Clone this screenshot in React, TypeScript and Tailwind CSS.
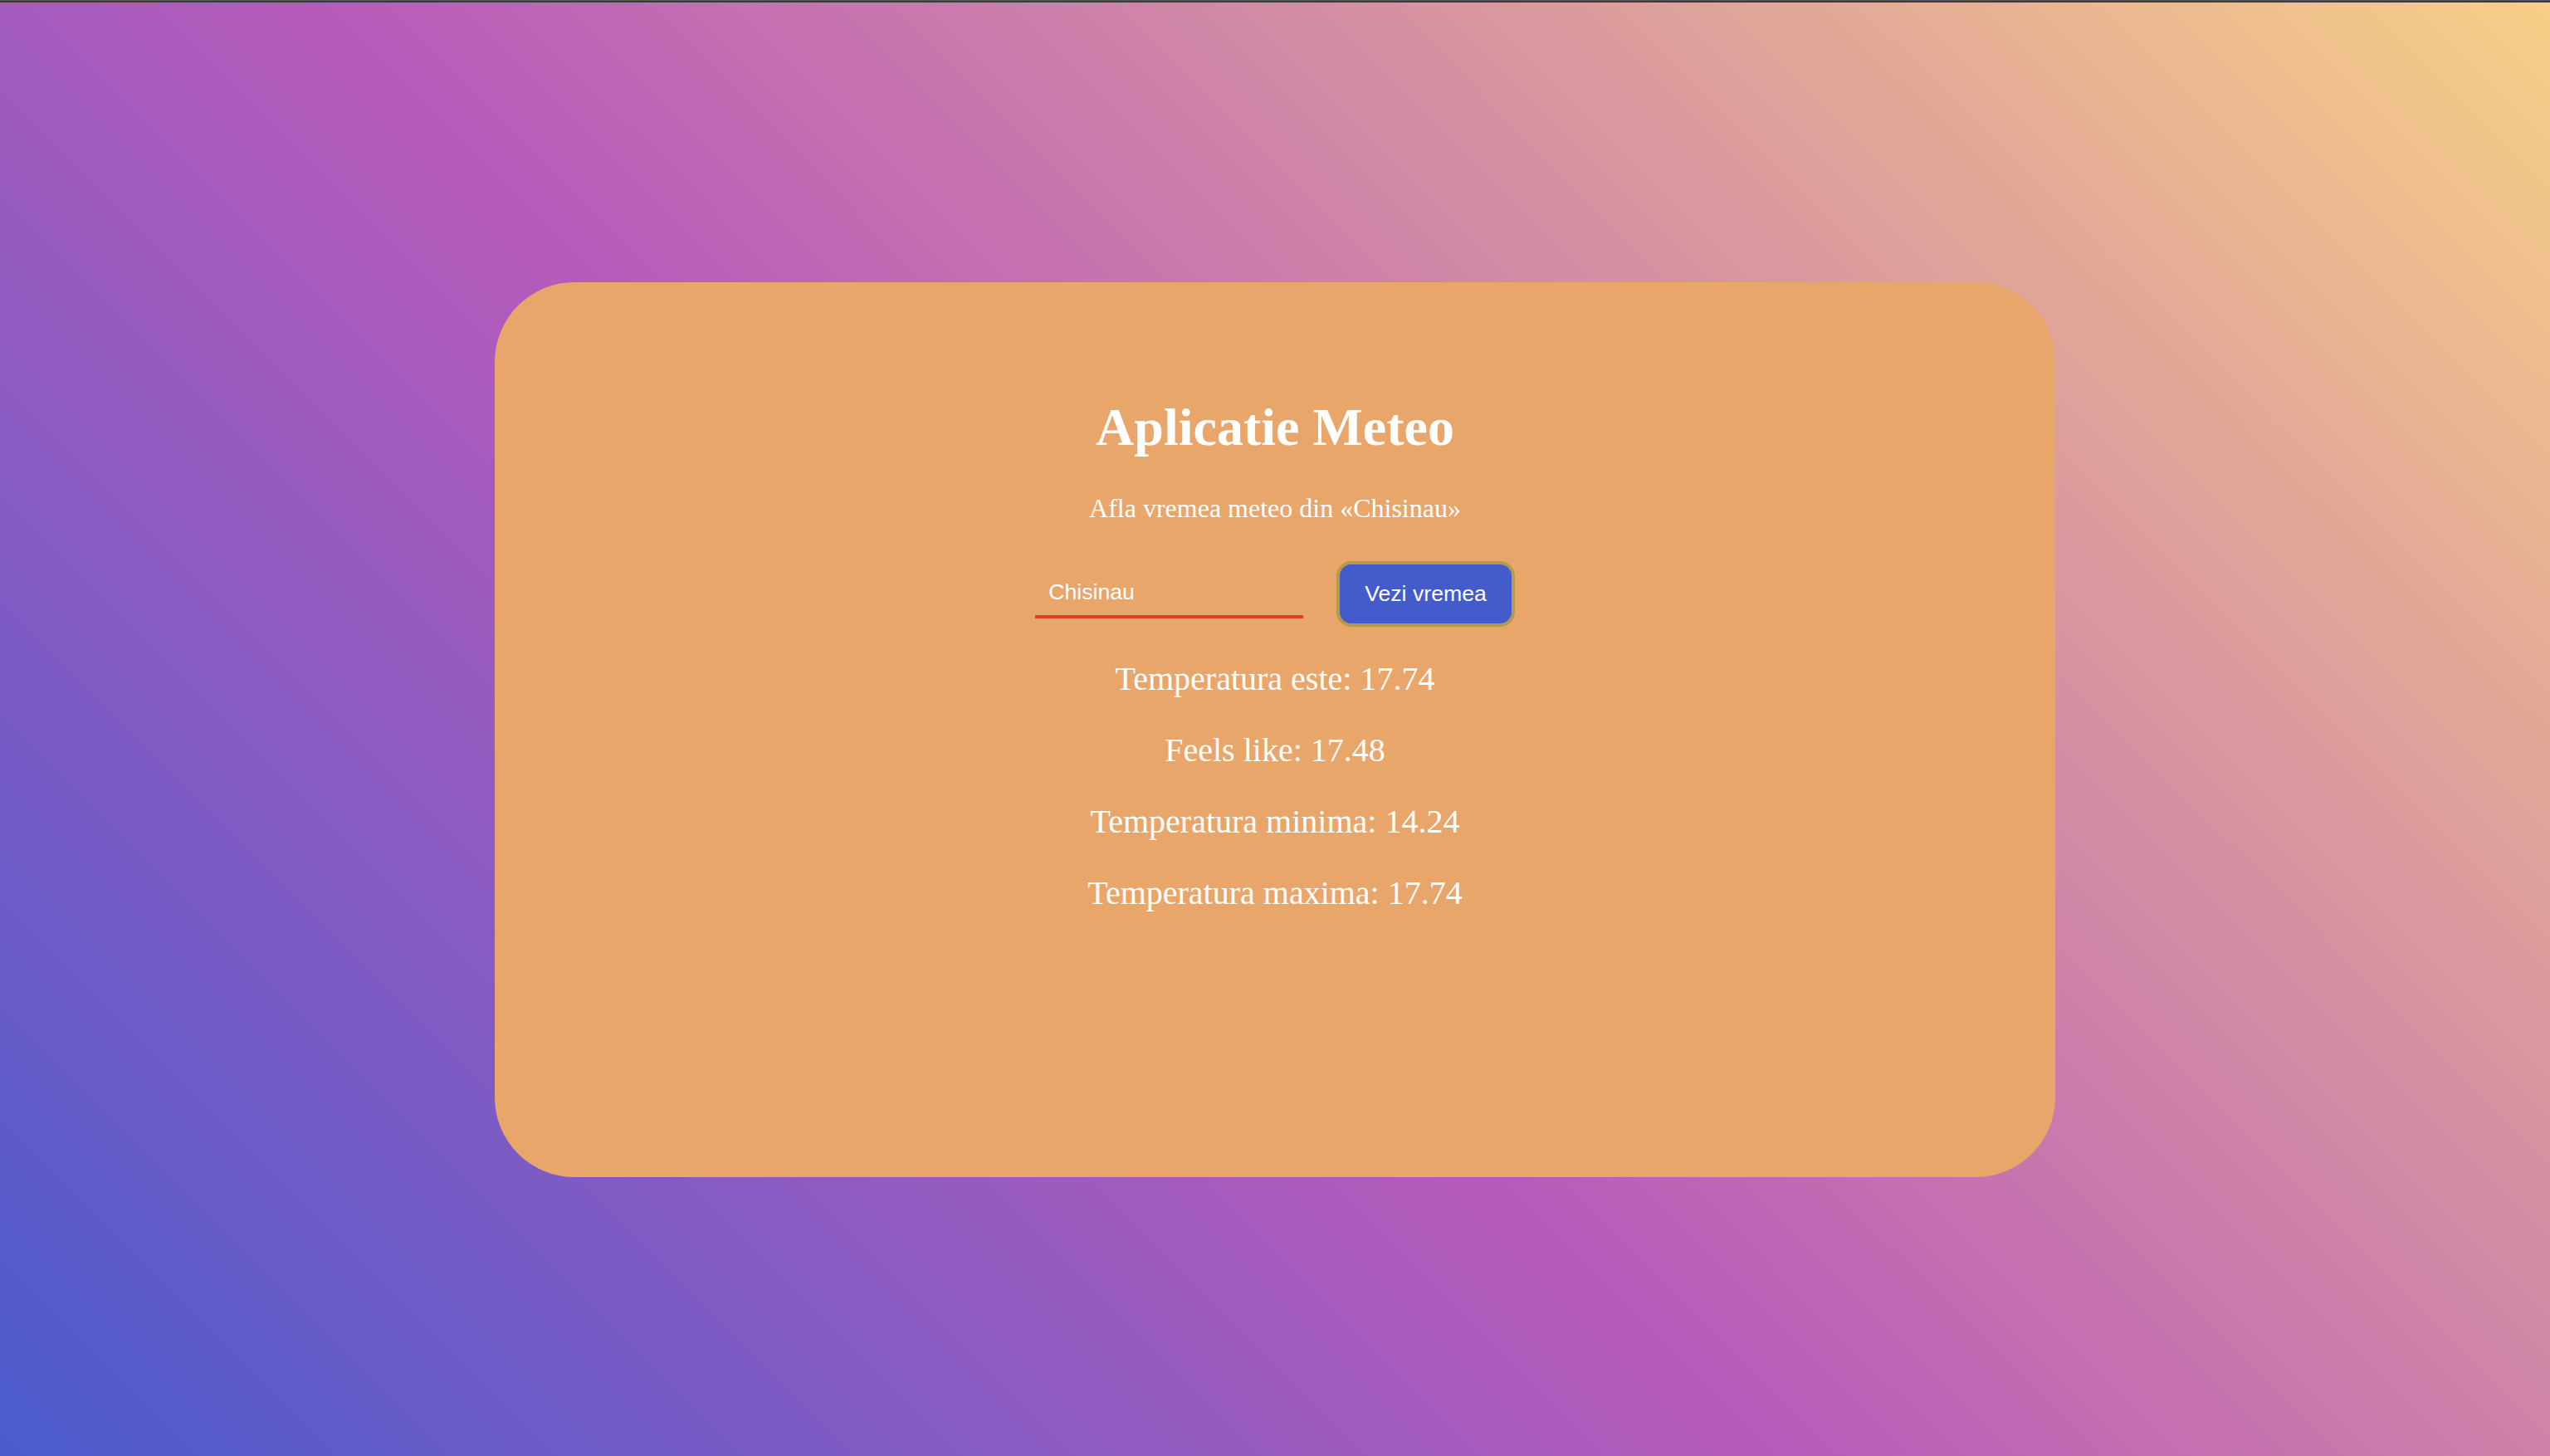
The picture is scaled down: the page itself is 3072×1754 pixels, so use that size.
import { useState } from "react";

export default function App() {
  const [city, setCity] = useState("Chisinau");

  const stats = [
    "Temperatura este: 17.74",
    "Feels like: 17.48",
    "Temperatura minima: 14.24",
    "Temperatura maxima: 17.74",
  ];

  return (
    <div className="w-full min-h-screen bg-[linear-gradient(45deg,#4a5bcd_0%,#b95bba_45%,#f7cf86_100%)]">
      {/* window chrome edge */}
      <div className="h-[3px] bg-[#3b3b3b] border-t border-[#585858]" />

      <div className="h-[1751px] flex items-center justify-center">
        <div className="w-[1880px] h-[1078px] rounded-[96px] bg-[#e8a66b] flex flex-col items-center pt-[139px] text-white font-['Liberation_Serif',_'Times_New_Roman',_serif]">
          <h1 className="text-[64px] leading-[71px] font-bold">Aplicatie Meteo</h1>

          <p className="mt-[44px] text-[32px] leading-[36px]">
            Afla vremea meteo din «{city}»
          </p>

          <div className="mt-[46px] flex items-end justify-center gap-[40px] font-['Liberation_Sans',_Arial,_sans-serif]">
            <input
              value={city}
              onChange={(e) => setCity(e.target.value)}
              className="mb-[10px] w-[323px] h-[58px] bg-transparent text-white text-[26.67px] leading-[30px] pl-[16px] pr-[12px] pt-[12px] pb-[12px] border-b-4 border-[#e5392a] outline-none"
            />
            <button className="h-[79px] bg-[#445bcb] text-white text-[26.67px] leading-[30px] px-[30px] border-4 border-[#b59a4a] rounded-[18px]">
              Vezi vremea
            </button>
          </div>

          <div className="mt-[40px] flex flex-col items-center gap-[40px]">
            {stats.map((s) => (
              <p key={s} className="text-[40px] leading-[46px]">
                {s}
              </p>
            ))}
          </div>
        </div>
      </div>
    </div>
  );
}
